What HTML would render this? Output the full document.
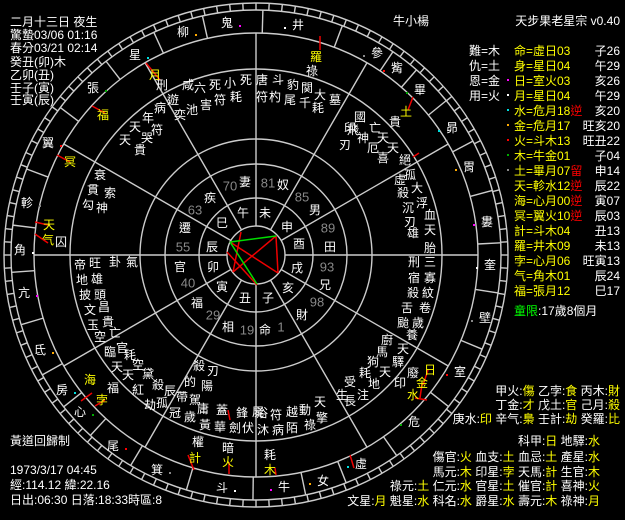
<!DOCTYPE html>
<html><head><meta charset="utf-8"><style>
html,body{margin:0;padding:0;background:#000;}
svg{display:block;}
text{font-family:"Liberation Sans","WenQuanYi Zen Hei","Noto Sans CJK TC",sans-serif;font-size:12px;fill:#fff;}
.y{fill:#ff0;}.r{fill:#f00;}.g{fill:#0f0;}.gr{fill:#888;font-size:13px;}
</style></head><body>
<svg id="s" width="625" height="520" viewBox="0 0 625 520" xmlns="http://www.w3.org/2000/svg">
<rect width="625" height="520" fill="#000"/>
<g id="geo" stroke="#ccc" stroke-width="1.4" fill="none"></g>
<g id="lines" stroke-width="1.5" fill="none">
<line x1="241" y1="232" x2="233" y2="272" stroke="#e00"/>
<line x1="230" y1="242" x2="278" y2="273" stroke="#e00"/>
<line x1="276" y1="236" x2="278" y2="273" stroke="#e00"/>
<line x1="276" y1="236" x2="233" y2="272" stroke="#e00"/>
<line x1="227" y1="252" x2="257" y2="285" stroke="#e00"/>
<line x1="230" y1="242" x2="276" y2="236" stroke="#0d0"/>
<line x1="230" y1="242" x2="257" y2="284" stroke="#0d0"/>
</g>
<g id="tx" text-anchor="middle" dominant-baseline="central"></g>
<g id="static">
<text x="10" y="26">二月十三日 夜生</text>
<text x="10" y="39">驚蟄03/06 01:16</text>
<text x="10" y="52">春分03/21 02:14</text>
<text x="10" y="66">癸丑(卯)木</text>
<text x="10" y="79">乙卯(丑)</text>
<text x="10" y="92">壬子(寅)</text>
<text x="10" y="104">壬寅(辰)</text>
<text x="620" y="25" text-anchor="end">天步果老星宗 v0.40</text>
<text x="10" y="445">黃道回歸制</text>
<text x="10" y="474">1973/3/17 04:45</text>
<text x="10" y="489">經:114.12 緯:22.16</text>
<text x="10" y="504">日出:06:30 日落:18:33時區:8</text>
</g>
<g id="panel"></g>
</svg>
<script>
var NS="http://www.w3.org/2000/svg",cx=256,cy=255;
function el(p,n,a,t){var e=document.createElementNS(NS,n);for(var k in a)e.setAttribute(k,a[k]);if(t!=null)e.textContent=t;p.appendChild(e);return e;}
var geo=document.getElementById('geo');
[252,245,222,186,116,91,57,29].forEach(function(r){el(geo,'circle',{cx:cx,cy:cy,r:r});});
function pt(r,a){a=a*Math.PI/180;return [cx+r*Math.cos(a),cy-r*Math.sin(a)];}
for(var i=0;i<12;i++){var p=pt(29,i*30),q=pt(222,i*30);el(geo,'line',{x1:p[0],y1:p[1],x2:q[0],y2:q[1]});}
for(var i=0;i<120;i++){var p=pt(245,i*3),q=pt(252,i*3);el(geo,'line',{x1:p[0],y1:p[1],x2:q[0],y2:q[1]});}
var M=[["鬼",227,23],["柳",183,32],["星",135,55],["張",93,88],["翼",48,143],["軫",27,203],["角",20,250],["亢",24,293],["氐",40,350],["房",62,390],["心",80,412],["尾",113,446],["箕",157,470],["斗",222,488],["牛",284,487],["女",323,481],["虛",361,464],["危",414,422],["室",460,372],["壁",485,318],["奎",490,265],["婁",487,222],["胃",469,167],["昴",452,128],["畢",420,90],["觜",397,68],["參",377,53],["井",298,25]];
var ang=M.map(function(m){return Math.atan2(cy-m[2],m[1]-cx)*180/Math.PI;});
for(var i=0;i<M.length;i++){var a=ang[i],b=ang[(i+1)%M.length];var d=b-a;while(d>180)d-=360;while(d<-180)d+=360;var m=a+d/2;var p=pt(222,m),q=pt(245,m);el(geo,'line',{x1:p[0],y1:p[1],x2:q[0],y2:q[1]});}
var tx=document.getElementById('tx');
var cols=['#f0f','#fa0','#0dd','#0a0','#f00','#888','#fff'];
M.forEach(function(m,i){el(tx,'text',{x:m[1],y:m[2]},m[0]);el(geo,'rect',{x:m[1]+(m[1]<cx?12:-14),y:m[2]+2,width:2,height:2,fill:cols[i%7],stroke:'none'});});
var W=[[162,85,"刑"],[173,100,"遊"],[188,85,"咸"],[200,88,"六"],[180,115,"奕"],[192,110,"池"],[206,105,"害"],[160,108,"病"],[148,118,"年"],[135,127,"天"],[157,130,"符"],[147,138,"哭"],[125,140,"天"],[140,150,"貴"],[100,175,"衰"],[93,190,"貫"],[110,193,"索"],[88,205,"勾"],[102,208,"神"],[61,242,"囚"],
[80,265,"帝"],[95,263,"旺"],[115,262,"卦"],[132,262,"氣"],[82,280,"地"],[97,279,"雄"],[85,295,"披"],[100,295,"頭"],[90,310,"文"],[104,307,"昌"],[93,325,"玉"],[108,322,"貴"],[100,337,"空"],[115,333,"亡"],[122,348,"官"],[110,352,"臨"],[130,355,"耗"],[117,367,"天"],[138,365,"空"],[128,375,"天"],[148,374,"黛"],[138,390,"紅"],[158,385,"殺"],[150,405,"劫"],[162,403,"孤"],[170,391,"辰"],[182,397,"帶"],[195,400,"駕"],[175,413,"冠"],[190,417,"歲"],[203,409,"庸"],[205,425,"黃"],[222,410,"蓋"],[220,427,"華"],[242,413,"鋒"],[235,428,"劍"],[258,412,"屍"],[248,428,"伏"],[199,366,"殺"],[213,371,"刃"],[190,382,"的"],[207,386,"陽"],[113,388,"福"],[198,442,"權"],[228,448,"暗"],[270,455,"耗"],
[414,262,"刑"],[430,262,"三"],[414,278,"宿"],[430,278,"寡"],[413,293,"殺"],[428,293,"紋"],[407,308,"舌"],[425,308,"卷"],[403,323,"颱"],[418,323,"歲"],[412,335,"養"],[387,340,"廚"],[403,349,"天"],[382,352,"馬"],[398,362,"驛"],[373,362,"狗"],[365,373,"耗"],[385,372,"天"],[350,382,"受"],[374,384,"地"],[342,395,"生"],[363,395,"注"],[350,401,"長"],[413,373,"廢"],[400,383,"印"],[320,402,"天"],[322,418,"擎"],[305,410,"動"],[310,425,"祿"],[292,412,"越"],[292,428,"陌"],[276,415,"符"],[278,430,"病"],[262,413,"浴"],[263,430,"沐"],
[411,21,"牛小楊"],[312,71,"祿"],[395,122,"貴"],[360,117,"國"],[375,128,"亡"],[350,128,"印"],[363,138,"神"],[383,138,"天"],[373,148,"厄"],[393,148,"天"],[383,158,"喜"],[405,160,"絕"],[410,175,"孤"],[417,188,"大"],[400,180,"虛"],[403,193,"殺"],[422,203,"浮"],[408,208,"沉"],[430,215,"血"],[410,222,"刃"],[430,230,"天"],[413,233,"雄"],[430,248,"胎"],[353,130,"飛"],[345,145,"刃"],[262,80,"唐"],[278,80,"斗"],[293,85,"豹"],[307,88,"関"],[320,95,"大"],[335,100,"墓"],[262,97,"符"],[275,97,"杓"],[290,100,"尾"],[305,103,"千"],[318,108,"耗"],[215,85,"死"],[230,83,"小"],[246,80,"死"],[220,100,"符"],[236,97,"耗"],
[245,182,"妻"],[283,185,"奴"],[315,210,"男"],[330,247,"田"],[325,285,"兄"],[302,315,"財"],[265,330,"命"],[228,327,"相"],[197,303,"福"],[180,267,"官"],[185,228,"遷"],[210,198,"疾"],
[243,213,"午"],[265,213,"未"],[287,227,"申"],[299,244,"酉"],[297,268,"戌"],[288,288,"亥"],[268,298,"子"],[245,298,"丑"],[222,287,"寅"],[213,267,"卯"],[212,247,"辰"],[222,223,"巳"]];
W.forEach(function(w){el(tx,'text',{x:w[0],y:w[1]},w[2]);});
var Y=[[155,75,"月"],[103,115,"福"],[70,162,"冥"],[49,225,"天"],[48,240,"气"],[90,380,"海"],[102,400,"孛"],[195,458,"計"],[228,462,"火"],[270,470,"木"],[430,370,"日"],[422,383,"金"],[413,395,"水"],[316,57,"羅"],[406,112,"土"]];
Y.forEach(function(w){el(tx,'text',{x:w[0],y:w[1],'class':'y'},w[2]);});
var G=[[230,186,"70"],[268,183,"81"],[302,197,"85"],[328,228,"89"],[327,267,"93"],[317,302,"98"],[281,327,"1"],[247,330,"19"],[213,315,"29"],[188,283,"40"],[183,247,"55"],[195,210,"63"]];
G.forEach(function(w){el(tx,'text',{x:w[0],y:w[1],'class':'gr'},w[2]);});
var RL=[[146,63,160,80],[92,106,105,113],[57,155,70,162],[35,222,48,225],[35,234,48,243],[81,401,92,393],[95,406,105,400],[194,470,188,455],[229,474,229,462],[276,475,275,468],[423,385,428,370],[422,384,420,398],[415,398,427,400],[354,468,350,455],[230,420,228,410],[413,97,408,110],[419,153,413,157],[320,50,320,36]];
RL.forEach(function(l){el(geo,'line',{x1:l[0],y1:l[1],x2:l[2],y2:l[3],stroke:'#e00','stroke-width':1.5});});
var P=document.getElementById('panel');
[["難=木",55],["仇=土",70],["恩=金",85],["用=火",100]].forEach(function(a){el(P,'text',{x:469,y:a[1]},a[0]);});
var R=[["命=虛日03","","子26",""],["身=星日04","","午29",""],["日=室火03","","亥26","#f0f"],["月=星日04","","午29","#fff"],["水=危月18","逆","亥20","#0dd"],["金=危月17","","旺亥20","#fa0"],["火=斗木13","","旺丑22","#f00"],["木=牛金01","","子04","#0a0"],["土=畢月07","留","申14","#888"],["天=軫水12","逆","辰22",""],["海=心月00","逆","寅07",""],["冥=翼火10","逆","辰03",""],["計=斗木04","","丑13",""],["羅=井木09","","未13",""],["孛=心月06","","旺寅13",""],["气=角木01","","辰24",""],["福=張月12","","巳17",""]];
R.forEach(function(r,i){var y=55+i*15;var t=el(P,'text',{x:514,y:y,'class':'y'},r[0]);if(r[1])el(t,'tspan',{'class':'r'},r[1]);el(P,'text',{x:620,y:y,'text-anchor':'end'},r[2]);if(r[3])el(P,'rect',{x:507,y:y-6,width:2,height:2,fill:r[3]});});
var t=el(P,'text',{x:514,y:315,'class':'g'},"童限");el(t,'tspan',{fill:'#fff'},":17歲8個月");
function kv(str,x,y){var t=el(P,'text',{x:x,y:y,'text-anchor':'end'});str.split(' ').forEach(function(s,i){var p=s.split(':');el(t,'tspan',{},(i?" ":"")+p[0]+":");el(t,'tspan',{'class':'y'},p[1]);});}
kv("甲火:傷 乙孛:食 丙木:財",620,395);
kv("丁金:才 戊土:官 己月:殺",620,409);
kv("庚水:印 辛气:梟 壬計:劫 癸羅:比",620,423);
kv("科甲:日 地驛:水",600,445);
kv("傷官:火 血支:土 血忌:土 產星:水",600,461);
kv("馬元:木 印星:孛 天馬:計 生官:木",600,476);
kv("祿元:土 仁元:水 官星:土 催官:計 喜神:火",600,490);
kv("文星:月 魁星:水 科名:水 爵星:水 壽元:木 祿神:月",600,505);
</script>
</body></html>
